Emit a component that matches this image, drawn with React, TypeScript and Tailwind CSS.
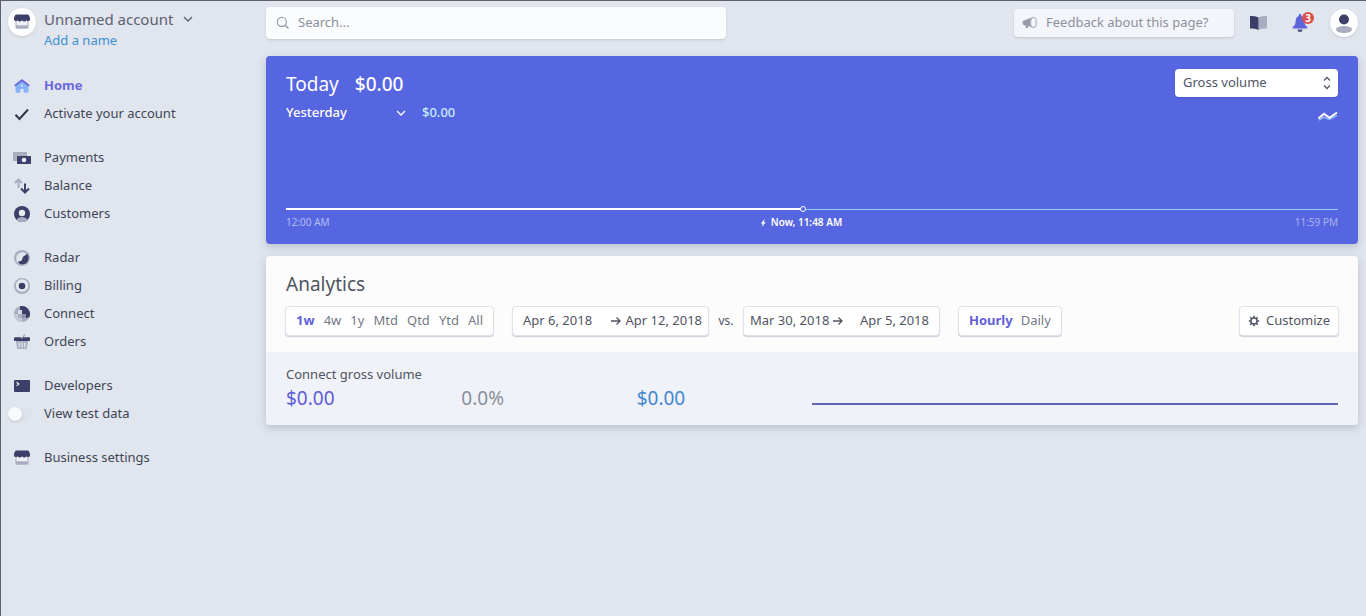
import type { ReactNode } from "react";

type IconProps = { className?: string };

const NAVY = "#3c4068";
const GREY = "#a9adbf";

function StoreIcon({ className = "" }: IconProps) {
  return (
    <svg className={className} width="16" height="16" viewBox="0 0 16 16" aria-hidden="true">
      <path d="M1.500 7h13v6.500a1.300 1.300 0 0 1-1.300 1.300H2.800a1.300 1.300 0 0 1-1.300-1.300z" fill={GREY} />
      <path d="M2.500 6.500h11v4.800h-11z" fill="#eff1f6" />
      <path d="M2.400.500h11.200c.6 0 1 .2 1.300.7L16 3.800v1.400a1.900 1.900 0 0 1-3.500 1 2.600 2.600 0 0 1-4.500 0 2.600 2.600 0 0 1-4.500 0A1.900 1.900 0 0 1 0 5.200V3.800l1.100-2.600c.3-.5.700-.7 1.300-.7z" fill={NAVY} />
    </svg>
  );
}

function HomeIcon() {
  return (
    <svg width="16" height="16" viewBox="0 0 16 16" aria-hidden="true">
      <path d="M1.500 6.500L8 2l6.500 4.500V14a.8.8 0 0 1-.8.8H9.600V11H6.400v3.800H2.300a.8.8 0 0 1-.8-.8z" fill="#86b4f8" />
      <path d="M8 1l7.300 5.700c.600.500.200 1.500-.5 1.500-.3 0-.5-.1-.7-.2L8 3.400 1.900 8c-.2.100-.4.200-.7.200-.7 0-1.100-1-.5-1.500z" fill="#6b66dc" />
      <path d="M7.200 6.800h1.600v1.800H7.200z" fill="#e6f0ff" />
    </svg>
  );
}

function CheckIcon() {
  return (
    <svg width="16" height="16" viewBox="0 0 16 16" fill="none" aria-hidden="true">
      <path d="M1.500 8.800l4 4.200L14 3.500" stroke="#32364a" strokeWidth="2" />
    </svg>
  );
}

function PaymentsIcon() {
  return (
    <svg width="18" height="16" viewBox="0 0 18 16" aria-hidden="true">
      <path d="M0 2h14v4H5v5H0z" fill={GREY} />
      <path d="M4 6h14v8H4z" fill={NAVY} />
      <circle cx="11" cy="10" r="2.300" fill="#e9ebf3" />
    </svg>
  );
}

function BalanceIcon() {
  return (
    <svg width="16" height="16" viewBox="0 0 16 16" fill="none" aria-hidden="true">
      <path d="M4.500 10V1.500M1 5l3.500-3.500L8 5" stroke={GREY} strokeWidth="2" />
      <path d="M11 5.500v9M7 10.500l4 4 4-4" stroke={NAVY} strokeWidth="2" />
    </svg>
  );
}

function CustomersIcon() {
  return (
    <svg width="16" height="16" viewBox="0 0 16 16" aria-hidden="true">
      <circle cx="8" cy="8" r="8" fill={NAVY} />
      <path d="M2.600 13.900C3.600 11.800 5.700 11 8 11s4.400.8 5.400 2.900A8 8 0 0 1 8 16a8 8 0 0 1-5.400-2.100z" fill={GREY} />
      <circle cx="8" cy="7" r="3.200" fill="#e9ebf3" />
    </svg>
  );
}

function RadarIcon() {
  return (
    <svg width="16" height="16" viewBox="0 0 16 16" aria-hidden="true">
      <circle cx="8" cy="8" r="8" fill={GREY} />
      <circle cx="8.500" cy="8.500" r="6.300" fill="#e1e5ee" />
      <path d="M12.800 3.500A6.500 6.500 0 0 1 9 14.500c-2 .2-4-.8-4.700-2.300-.2-.6.100-1 .7-1 1.700.1 2.700-.5 3.200-2 .4-1.200.4-2.200 1.500-3 1-.6 2-.8 3.100-2.700z" fill={NAVY} />
    </svg>
  );
}

function BillingIcon() {
  return (
    <svg width="16" height="16" viewBox="0 0 16 16" aria-hidden="true">
      <circle cx="8" cy="8" r="8" fill={GREY} />
      <circle cx="8" cy="7.500" r="6.200" fill="#e6e9f1" />
      <circle cx="8" cy="8" r="3.300" fill={NAVY} />
    </svg>
  );
}

function ConnectIcon() {
  return (
    <svg width="16" height="16" viewBox="0 0 16 16" aria-hidden="true">
      <circle cx="8" cy="8" r="8" fill={GREY} />
      <path d="M0 8a8 8 0 0 0 8 8v-4H4V8z" fill="#c6cad7" />
      <path d="M6 .3A8 8 0 0 1 15.300 11.300L12 12V8H8V4H6z" fill={NAVY} />
      <path d="M4 4h4v4H4z" fill="#d9dce6" />
      <path d="M8 8h4v4H8z" fill="#8e93ab" />
    </svg>
  );
}

function OrdersIcon() {
  return (
    <svg width="16" height="16" viewBox="0 0 16 16" aria-hidden="true">
      <path d="M7 4.500l3.200-4.500 1.300.9L9 4.500z" fill={GREY} />
      <path d="M2 7h12l-1 7a1.200 1.200 0 0 1-1.200 1H4.200A1.200 1.200 0 0 1 3 14z" fill={GREY} />
      <path d="M5.200 8.500v5M8 8.500v5M10.800 8.500v5" stroke="#e9ebf3" strokeWidth="1.200" />
      <path d="M1 3.200h6L8 5l1-1.800h6a1 1 0 0 1 1 1V6a1 1 0 0 1-1 1H1a1 1 0 0 1-1-1V4.200a1 1 0 0 1 1-1z" fill={NAVY} />
    </svg>
  );
}

function DevelopersIcon() {
  return (
    <svg width="16" height="16" viewBox="0 0 16 16" fill="none" aria-hidden="true">
      <rect y="2" width="16" height="12" rx="1" fill={NAVY} />
      <path d="M2.500 4.300l2.300 1.800-2.300 1.800" stroke="#eef0f7" strokeWidth="1.200" />
    </svg>
  );
}

function ChevronDown({ className = "" }: IconProps) {
  return (
    <svg className={className} width="10" height="8" viewBox="0 0 10 8" fill="none" aria-hidden="true">
      <path d="M1 2l4 4 4-4" stroke="currentColor" strokeWidth="1.300" />
    </svg>
  );
}

function SearchIcon() {
  return (
    <svg width="14" height="14" viewBox="0 0 14 14" fill="none" aria-hidden="true">
      <circle cx="5.800" cy="5.800" r="4.600" stroke="#8c94a4" strokeWidth="1.100" />
      <path d="M9.200 9.200L12.500 12.500" stroke="#8c94a4" strokeWidth="1.300" />
    </svg>
  );
}

function MegaphoneIcon() {
  return (
    <svg width="16" height="14" viewBox="0 0 16 14" aria-hidden="true">
      <path d="M11 1v11L6.500 9.800 6 12H4l-.5-2.500C1.500 9.500.500 8.200.500 6.700S1.500 4 3.500 4z" fill="#989ca9" />
      <ellipse cx="11.500" cy="6.500" rx="2.800" ry="5" fill="#f4f6fa" stroke="#b4b8c3" strokeWidth="1.200" />
    </svg>
  );
}

function BookIcon() {
  return (
    <svg width="18" height="16" viewBox="0 0 18 16" aria-hidden="true">
      <path d="M8.500 2.500C10.500 1.300 14 1 17 1v12.500c-3 0-6.500.3-8.500 1.500z" fill={GREY} />
      <path d="M0 1c3 0 6.500.3 8.500 1.500V15C6.500 13.800 3 13.500 0 13.500z" fill={NAVY} />
    </svg>
  );
}

function BellIcon() {
  return (
    <svg width="16" height="18" viewBox="0 0 16 18" aria-hidden="true">
      <path d="M5.500 15.500h5a2.500 2.500 0 0 1-5 0z" fill="#4a4d85" />
      <path d="M8 0c.8 0 1.300.5 1.300 1.200v.9c2 .6 2.900 2.400 3 4.700.1 3.200 1 4.800 2.700 5.900.9.600.5 1.800-.5 1.800h-13c-1 0-1.400-1.200-.5-1.800 1.700-1.100 2.600-2.700 2.700-5.900.1-2.300 1-4.100 3-4.700v-.9C6.700.5 7.200 0 8 0z" fill="#5f64d8" />
    </svg>
  );
}

function AvatarIcon() {
  return (
    <svg width="18" height="20" viewBox="0 0 18 20" aria-hidden="true">
      <circle cx="9" cy="6.500" r="5" fill={NAVY} />
      <ellipse cx="9" cy="16.500" rx="8" ry="3.400" fill={GREY} />
    </svg>
  );
}

function SortIcon({ className = "" }: IconProps) {
  return (
    <svg className={className} width="8" height="14" viewBox="0 0 8 14" fill="none" aria-hidden="true">
      <path d="M1 4.500l3-3 3 3M1 9.500l3 3 3-3" stroke="#4f5566" strokeWidth="1.300" />
    </svg>
  );
}

function TrendIcon() {
  return (
    <svg width="20" height="10" viewBox="0 0 20 10" fill="none" aria-hidden="true">
      <path d="M1 9l5-3 5 2.500 8-4" stroke="#8fb6f5" strokeWidth="1.500" />
      <path d="M.5 7.500L6 2.800l5.500 4L19 1.500" stroke="#fff" strokeWidth="2" />
    </svg>
  );
}

function ArrowIcon() {
  return (
    <svg width="10" height="10" viewBox="0 0 10 10" fill="none" aria-hidden="true">
      <path d="M0 5h9M5.500 1.500L9 5 5.500 8.500" stroke="currentColor" strokeWidth="1.300" />
    </svg>
  );
}

function GearIcon() {
  return (
    <svg width="12" height="12" viewBox="0 0 12 12" fill="none" stroke="#4f5566" aria-hidden="true">
      <circle cx="6" cy="6" r="3.100" strokeWidth="1.500" />
      <path d="M6 .8v2M6 9.200v2M.8 6h2M9.200 6h2M2.300 2.300l1.400 1.400M8.300 8.300l1.400 1.400M2.300 9.700l1.400-1.400M8.300 3.700l1.400-1.400" strokeWidth="1.600" />
    </svg>
  );
}

function BoltIcon() {
  return (
    <svg width="6" height="10" viewBox="0 0 6 10" aria-hidden="true">
      <path d="M4.500 1L.5 5.500h2L1.500 9l4-4.800h-2z" fill="#fff" />
    </svg>
  );
}

type NavEntry = { label: string; icon: ReactNode; active?: boolean };

const navGroups: NavEntry[][] = [
  [
    { label: "Home", icon: <HomeIcon />, active: true },
    { label: "Activate your account", icon: <CheckIcon /> },
  ],
  [
    { label: "Payments", icon: <PaymentsIcon /> },
    { label: "Balance", icon: <BalanceIcon /> },
    { label: "Customers", icon: <CustomersIcon /> },
  ],
  [
    { label: "Radar", icon: <RadarIcon /> },
    { label: "Billing", icon: <BillingIcon /> },
    { label: "Connect", icon: <ConnectIcon /> },
    { label: "Orders", icon: <OrdersIcon /> },
  ],
];

function NavLink({ label, icon, active }: NavEntry) {
  return (
    <a
      href="#"
      className={`flex h-7 items-center gap-2 ${active ? "font-bold text-[#6a68dc]" : "text-[#3f4558]"}`}
    >
      <span className="flex w-7 justify-center">{icon}</span>
      {label}
    </a>
  );
}

function Sidebar() {
  return (
    <aside className="w-64 shrink-0 pl-[7px] pt-[7px]">
      <div className="flex gap-2">
        <span className="flex size-7 items-center justify-center rounded-full bg-white shadow-sm">
          <StoreIcon />
        </span>
        <div>
          <button className="flex h-[22px] items-center gap-2.5 text-[15px] text-[#5b6172]">
            Unnamed account
            <ChevronDown />
          </button>
          <a href="#" className="block h-5 leading-5 text-[#3f8fd2]">
            Add a name
          </a>
        </div>
      </div>
      <nav className="mt-[22px] flex flex-col gap-4">
        {navGroups.map((group) => (
          <div key={group[0].label}>
            {group.map((entry) => (
              <NavLink key={entry.label} {...entry} />
            ))}
          </div>
        ))}
        <div>
          <NavLink label="Developers" icon={<DevelopersIcon />} />
          <label className="flex h-7 items-center gap-2 text-[#3f4558]">
            <span className="flex w-7">
              <span className="flex h-3.5 w-6 items-center rounded-full bg-[#dde1ea]">
                <input
                  type="checkbox"
                  role="switch"
                  className="size-3.5 appearance-none rounded-full bg-[#f8f9fc] shadow"
                />
              </span>
            </span>
            View test data
          </label>
        </div>
        <NavLink label="Business settings" icon={<StoreIcon />} />
      </nav>
    </aside>
  );
}

function TopBar() {
  return (
    <header className="flex items-center justify-between pt-1.5">
      <label className="flex h-8 w-[460px] items-center gap-2 rounded-sm bg-[#fbfcfe] px-2.5 shadow">
        <SearchIcon />
        <input
          type="search"
          aria-label="Search"
          placeholder="Search…"
          className="min-w-0 flex-1 bg-transparent outline-none placeholder:text-[#8a8f9c]"
        />
      </label>
      <div className="flex items-center">
        <button className="flex h-7 w-[220px] items-center gap-2 rounded-sm bg-[#f3f5fa] px-2 text-[#8c909c] shadow-sm">
          <MegaphoneIcon />
          Feedback about this page?
        </button>
        <button aria-label="Documentation" className="ml-4">
          <BookIcon />
        </button>
        <button aria-label="Notifications" className="relative ml-6">
          <BellIcon />
          <span className="absolute -top-0.5 left-2.5 flex size-3 items-center justify-center rounded-full bg-[#dd4f4b] text-[10px] font-bold leading-3 text-white">
            3
          </span>
        </button>
        <button
          aria-label="Profile"
          className="ml-[22px] flex size-7 items-center justify-center rounded-full bg-white shadow-sm"
        >
          <AvatarIcon />
        </button>
      </div>
    </header>
  );
}

function TodayCard() {
  return (
    <section className="flex h-[188px] flex-col rounded-sm bg-[#5666e0] px-5 pt-3 text-white shadow-[0_3px_8px_#b9bfce]">
      <div className="flex justify-between">
        <div>
          <h1 className="flex h-8 items-center gap-4 text-[19px]">
            Today <span className="font-medium">$0.00</span>
          </h1>
          <div className="flex h-6 items-center gap-4 pt-0.5">
            <span className="relative flex w-[120px] items-center font-medium">
              <select aria-label="Comparison period" className="w-full appearance-none outline-none">
                <option>Yesterday</option>
              </select>
              <ChevronDown className="pointer-events-none absolute right-0 top-1.5" />
            </span>
            <span className="font-medium text-[#c5ecff]">$0.00</span>
          </div>
        </div>
        <div className="flex flex-col items-end gap-3.5 pt-px">
          <span className="relative flex">
            <select
              aria-label="Metric"
              className="h-7 w-[163px] appearance-none rounded-sm bg-white px-2 text-[#4f5566] shadow outline-none"
            >
              <option>Gross volume</option>
            </select>
            <SortIcon className="pointer-events-none absolute right-[7px] top-[7px]" />
          </span>
          <button aria-label="Show chart">
            <TrendIcon />
          </button>
        </div>
      </div>
      <div className="mt-auto pb-[11px]">
        <div className="flex items-center">
          <span className="h-0.5 w-[49%] bg-white" />
          <span className="-mx-px size-1.5 rounded-full border border-white bg-[#5666e0]" />
          <span className="h-px flex-1 bg-[#8fd0f5]" />
        </div>
        <div className="flex h-[21px] items-center text-[10px]">
          <span className="w-[49%] text-[#b3bcf5]">12:00 AM</span>
          <span className="flex -translate-x-1/2 items-center gap-1 font-semibold">
            <BoltIcon />
            Now, 11:48 AM
          </span>
          <span className="ml-auto text-[#a9b3f2]">11:59 PM</span>
        </div>
      </div>
    </section>
  );
}

const control =
  "flex h-[30px] items-center rounded-sm border border-[#dfe2ea] bg-white shadow-[0_1px_1px_#c9cdd6]";

const ranges = ["1w", "4w", "1y", "Mtd", "Qtd", "Ytd", "All"];

function AnalyticsCard() {
  return (
    <section className="rounded-sm bg-[#fcfcfd] text-[#50545f] shadow-[0_3px_8px_#b9bfce]">
      <div className="px-5 pb-4 pt-3.5">
        <h2 className="h-7 text-[19px] leading-7">Analytics</h2>
        <div className="mt-2 flex items-center">
          <div className={`${control} -ml-px w-[209px] justify-between px-2.5`}>
            {ranges.map((range) => (
              <button
                key={range}
                className={range === "1w" ? "font-bold text-[#625fdb]" : "text-[#747985]"}
              >
                {range}
              </button>
            ))}
          </div>
          <button className={`${control} ml-[18px] w-[197px] justify-between pl-2.5 pr-1.5`}>
            Apr 6, 2018
            <span className="flex items-center gap-1">
              <ArrowIcon />
              Apr 12, 2018
            </span>
          </button>
          <span className="w-[34px] text-center text-xs">vs.</span>
          <button className={`${control} w-[197px] justify-between pl-1.5 pr-2.5`}>
            <span className="flex items-center gap-1">
              Mar 30, 2018
              <ArrowIcon />
            </span>
            Apr 5, 2018
          </button>
          <div className={`${control} ml-[18px] gap-2 px-2.5`}>
            <button className="font-bold text-[#625fdb]">Hourly</button>
            <button className="text-[#747985]">Daily</button>
          </div>
          <button className={`${control} -mr-px ml-auto gap-1.5 px-2`}>
            <GearIcon />
            Customize
          </button>
        </div>
      </div>
      <div className="flex h-[73px] rounded-b-sm bg-[#f0f2f9] px-5 pt-3">
        <div className="w-1/2">
          <h3 className="h-5 leading-5">Connect gross volume</h3>
          <div className="grid h-6 grid-cols-3 items-center text-[19px]">
            <span className="text-[#5f5cdb]">$0.00</span>
            <span className="text-[#8a8f9b]">0.0%</span>
            <span className="text-[#4487d0]">$0.00</span>
          </div>
        </div>
        <div className="mt-[39px] h-0.5 w-1/2 bg-[#6564bd]" />
      </div>
    </section>
  );
}

export default function App() {
  return (
    <div className="flex min-h-screen border-l border-t border-[#5d5f6b] bg-[#e1e5ed] font-['Noto_Sans',sans-serif] text-[13px]">
      <Sidebar />
      <main className="ml-[9px] flex min-w-0 flex-1 flex-col pr-2">
        <TopBar />
        <div className="mt-[17px] flex flex-col gap-3">
          <TodayCard />
          <AnalyticsCard />
        </div>
      </main>
    </div>
  );
}
